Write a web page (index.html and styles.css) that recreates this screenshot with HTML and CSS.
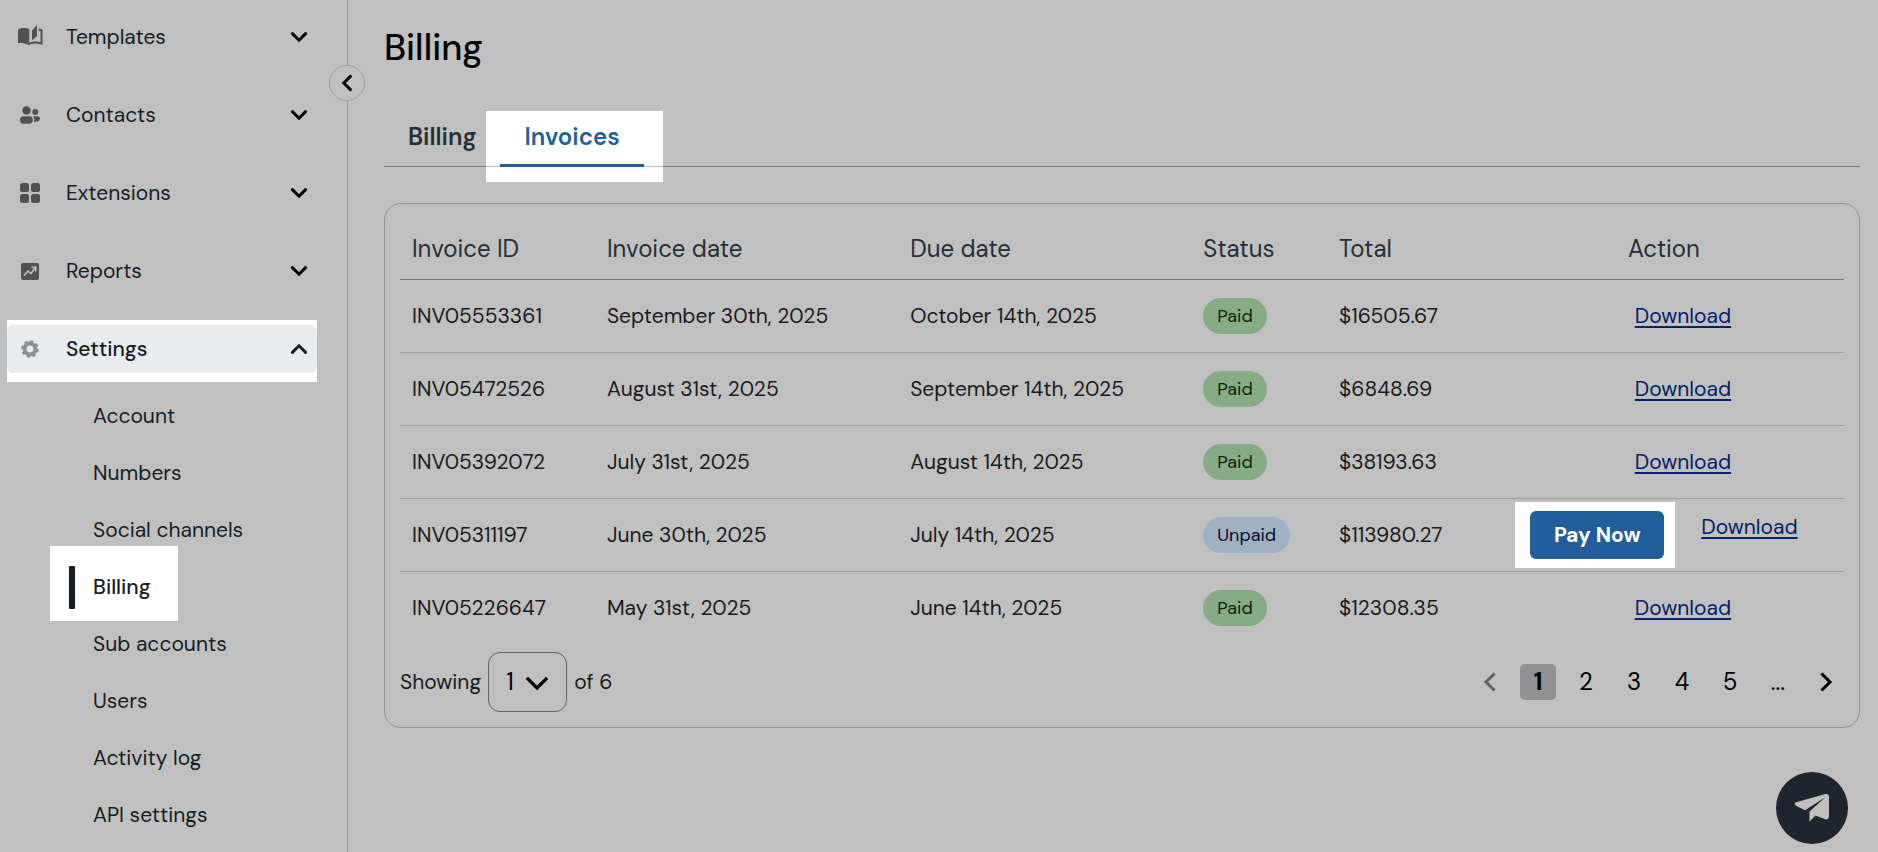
FILE: index.html
```html
<!DOCTYPE html>
<html lang="en">
<head>
<meta charset="utf-8">
<title>Billing</title>
<meta name="viewport" content="width=device-width, initial-scale=1">
<link rel="stylesheet" href="styles.css">
</head>
<body>
<svg class="sprite" aria-hidden="true">
  <symbol id="chevron" viewBox="0 0 18 18"><path d="M2.4 5.6 9 12.2l6.6-6.6" fill="none" stroke="currentColor" stroke-width="3" stroke-linecap="round" stroke-linejoin="miter"/></symbol>
  <symbol id="chevron-wide" viewBox="0 0 24 24"><path d="M3 8 12 17l9-9" fill="none" stroke="currentColor" stroke-width="3.200" stroke-linecap="square"/></symbol>
  <symbol id="chevron-page" viewBox="0 0 24 24"><path d="M4.500 8.500 12 16l7.500-7.500" fill="none" stroke="currentColor" stroke-width="3" stroke-linecap="square"/></symbol>
</svg>
<div class="app">
  <nav class="sidebar" aria-label="Main">
    <button class="collapse" type="button" aria-label="Collapse menu"><svg class="chevron left"><use href="#chevron"/></svg></button>
    <ul class="menu">
      <li><button class="menu-item" type="button">
        <svg class="icon" viewBox="0 0 26 26"><path fill="currentColor" d="M1 6.200Q1 5.400 1.700 5Q6.500 2.900 11.500 4.800Q12.300 5.200 12.300 6V19Q7 17 2.300 19.200Q1 19.700 1 18.600Z"/><path d="M12.300 19.600Q18 17.200 24.500 19.600V5.500" fill="none" stroke="currentColor" stroke-width="2"/><path fill="currentColor" d="M15 6.500 20 1V12L15 16.500ZM21.700 4.200 25.300 5.500V7H21.700ZM2 18Q8 16.500 13 19.500L12.500 21.300 9 20Z"/></svg>
        <span>Templates</span><svg class="chevron"><use href="#chevron"/></svg></button></li>
      <li><button class="menu-item" type="button">
        <svg class="icon" viewBox="0 0 26 26"><g fill="currentColor"><circle cx="9.500" cy="8.500" r="4.200"/><circle cx="18.300" cy="10" r="3"/><rect x="3" y="14.300" width="12.800" height="7.500" rx="3.700"/><path d="M16.200 14.300H20Q23 14.300 23 16.800Q22.700 19.800 18.500 19.800H16.800Q18.300 17 16.200 14.300Z"/></g></svg>
        <span>Contacts</span><svg class="chevron"><use href="#chevron"/></svg></button></li>
      <li><button class="menu-item" type="button">
        <svg class="icon" viewBox="0 0 26 26"><g fill="currentColor"><rect x="3" y="3" width="9" height="9" rx="2.500"/><rect x="14" y="3" width="9" height="9" rx="2.500"/><rect x="3" y="14" width="9" height="9" rx="2.500"/><rect x="14" y="14" width="9" height="9" rx="2.500"/></g></svg>
        <span>Extensions</span><svg class="chevron"><use href="#chevron"/></svg></button></li>
      <li><button class="menu-item" type="button">
        <svg class="icon" viewBox="0 0 26 26"><rect x="4" y="5" width="18" height="17" rx="2" fill="currentColor"/><path d="m7 17.500 4-4.500 3 2.500 4.500-6M14.500 9.200h4.300v4.300" fill="none" stroke="#c0c0c0" stroke-width="1.600"/></svg>
        <span>Reports</span><svg class="chevron"><use href="#chevron"/></svg></button></li>
      <li class="open"><button class="menu-item" type="button" aria-expanded="true">
        <svg class="icon" viewBox="0 0 26 26"><circle cx="13" cy="13" r="5.400" fill="none" stroke="currentColor" stroke-width="4"/><circle cx="13" cy="13" r="7.500" fill="none" stroke="currentColor" stroke-width="2.600" stroke-dasharray="3.200 2.690"/></svg>
        <span>Settings</span><svg class="chevron up"><use href="#chevron"/></svg></button></li>
    </ul>
    <ul class="submenu">
      <li><a href="#">Account</a></li>
      <li><a href="#">Numbers</a></li>
      <li><a href="#">Social channels</a></li>
      <li><a href="#" class="current" aria-current="page">Billing</a></li>
      <li><a href="#">Sub accounts</a></li>
      <li><a href="#">Users</a></li>
      <li><a href="#">Activity log</a></li>
      <li><a href="#">API settings</a></li>
    </ul>
  </nav>

  <main class="main">
    <h1>Billing</h1>
    <div class="tabs" role="tablist">
      <button class="tab" type="button" role="tab" aria-selected="false">Billing</button>
      <button class="tab active" type="button" role="tab" aria-selected="true">Invoices</button>
    </div>

    <section class="card">
      <table class="invoices">
        <colgroup><col class="c-id"><col class="c-date"><col class="c-due"><col class="c-status"><col class="c-total"><col></colgroup>
        <thead>
          <tr><th>Invoice ID</th><th>Invoice date</th><th>Due date</th><th>Status</th><th>Total</th><th class="action">Action</th></tr>
        </thead>
        <tbody>
          <tr><td>INV05553361</td><td>September 30th, 2025</td><td>October 14th, 2025</td><td><span class="badge paid">Paid</span></td><td>$16505.67</td><td class="action"><a href="#">Download</a></td></tr>
          <tr><td>INV05472526</td><td>August 31st, 2025</td><td>September 14th, 2025</td><td><span class="badge paid">Paid</span></td><td>$6848.69</td><td class="action"><a href="#">Download</a></td></tr>
          <tr><td>INV05392072</td><td>July 31st, 2025</td><td>August 14th, 2025</td><td><span class="badge paid">Paid</span></td><td>$38193.63</td><td class="action"><a href="#">Download</a></td></tr>
          <tr><td>INV05311197</td><td>June 30th, 2025</td><td>July 14th, 2025</td><td><span class="badge unpaid">Unpaid</span></td><td>$113980.27</td><td class="action"><div class="pair"><span class="spot"><button class="pay" type="button">Pay Now</button></span><a href="#">Download</a></div></td></tr>
          <tr><td>INV05226647</td><td>May 31st, 2025</td><td>June 14th, 2025</td><td><span class="badge paid">Paid</span></td><td>$12308.35</td><td class="action"><a href="#">Download</a></td></tr>
        </tbody>
      </table>
      <div class="footer">
        <div class="showing">
          <label for="page">Showing</label>
          <span class="select"><select id="page"><option>1</option><option>2</option><option>3</option></select><svg class="chevron big"><use href="#chevron-wide"/></svg></span>
          <span>of 6</span>
        </div>
        <nav class="pager" aria-label="Pages">
          <button type="button" aria-label="Previous" disabled><svg class="chevron left big"><use href="#chevron-page"/></svg></button>
          <button type="button" class="on" aria-current="page">1</button>
          <button type="button">2</button>
          <button type="button">3</button>
          <button type="button">4</button>
          <button type="button">5</button>
          <button type="button">...</button>
          <button type="button" aria-label="Next"><svg class="chevron right big"><use href="#chevron-page"/></svg></button>
        </nav>
      </div>
    </section>
  </main>
</div>
<button class="fab" type="button" aria-label="Send message"><svg viewBox="0 0 36 32"><path fill="#c0c0c0" d="M1.200 10.500 31.500 2Q35 1.500 35 4.500V23.500Q35 28 31 27.300L21.500 23.500 15.500 29.500V19.500L31 5.500 11 18.200 2.500 14Q0 12 1.200 10.500Z"/></svg></button>
</body>
</html>
```

FILE: styles.css
```css
* { box-sizing: border-box; }

body {
  margin: 0;
  background: #c0c0c0;
  color: #1a1b1d;
  font-family: "DM Sans", Inter, sans-serif;
  font-size: 21px;
  line-height: 28px;
}

ul { list-style: none; margin: 0; padding: 0; }

button {
  font: inherit;
  color: inherit;
  background: none;
  border: 0;
  padding: 0;
  cursor: pointer;
}

.sprite { position: absolute; width: 0; height: 0; }

.app { display: flex; min-height: 100vh; }

/* Sidebar */
.sidebar {
  position: relative;
  flex: 0 0 348px;
  padding: 13px 30px 0 7px;
  border-right: 1px solid #989b9b;
  color: #151d25;
}

.collapse {
  position: absolute;
  top: 65px;
  right: -18px;
  width: 36px;
  height: 36px;
  display: grid;
  place-items: center;
  border: 1px solid #989fa3;
  border-radius: 50%;
  background: #c0c0c0;
  color: #000;
}

.menu { display: grid; gap: 30px; }

.menu-item {
  display: flex;
  align-items: center;
  width: 100%;
  height: 48px;
  padding: 0 9px 0 10px;
  border-radius: 6px;
  text-align: left;
}

.menu-item span { flex: 1; padding-left: 23px; }

.icon { width: 26px; height: 26px; color: #515151; }

.chevron { display: block; width: 18px; height: 18px; color: #000; }
.chevron.big { width: 24px; height: 24px; }
.chevron.up { transform: rotate(180deg); }
.chevron.left { transform: rotate(90deg); }
.chevron.right { transform: rotate(-90deg); }

.open { margin-top: -5px; padding: 5px 0 9px; background: #fff; }
.open .menu-item { background: #e8ecef; color: #191d26; font-weight: 500; }
.open .icon { color: #8d8f90; }
.open .chevron { color: #191d26; }

.submenu { padding: 5px 0 0 86px; }

.submenu a {
  position: relative;
  display: inline-block;
  padding: 15px 0 14px;
  color: inherit;
  text-decoration: none;
  vertical-align: top;
}

.submenu .current { z-index: 0; color: #191d26; font-weight: 500; }

.current::before {
  content: "";
  position: absolute;
  z-index: -2;
  top: -12px;
  left: -43px;
  width: 128px;
  height: 75px;
  background: #fff;
}

.current::after {
  content: "";
  position: absolute;
  top: 8px;
  left: -24px;
  width: 6px;
  height: 43px;
  border-radius: 1px;
  background: #191d26;
}

/* Main column */
.main { flex: 1; min-width: 0; padding: 25px 18px 0 36px; }

h1 {
  margin: 0;
  color: #000;
  font-size: 36px;
  font-weight: 500;
  line-height: 46px;
}

.tabs {
  display: flex;
  margin-top: 41px;
  border-bottom: 1px solid #747c83;
}

.tab {
  position: relative;
  height: 54px;
  padding: 0 24px 5px;
  color: #252f37;
  font-size: 24px;
  font-weight: 600;
}

.tab.active { z-index: 0; color: #205f9e; }

.active::before {
  content: "";
  position: absolute;
  z-index: -1;
  inset: -1px -19px -16px -14px;
  background: linear-gradient(#b4c2cc, #b4c2cc) 0 55px / 100% 1px no-repeat #fff;
}

.active::after {
  content: "";
  position: absolute;
  inset: auto 0 -1px;
  height: 3px;
  background: #205f9e;
}

.card {
  margin-top: 36px;
  padding: 15px;
  border: 1px solid #929494;
  border-radius: 17px;
}

.invoices { width: 100%; border-collapse: collapse; table-layout: fixed; }
.c-id { width: 13.5%; }
.c-date { width: 21%; }
.c-due { width: 20.3%; }
.c-status { width: 9.4%; }
.c-total { width: 12.8%; }

.invoices th,
.invoices td {
  padding: 0 0 0 12px;
  text-align: left;
  white-space: nowrap;
}

.invoices th {
  height: 60px;
  color: #252f37;
  font-size: 24px;
  font-weight: 400;
  border-bottom: 1px solid #727b82;
}

.invoices td { height: 73px; border-bottom: 1px solid #9aa1a1; }
.invoices tr:last-child td { border-bottom: 0; }
.invoices .action { padding: 0 0 0 10px; text-align: center; }
.invoices th.action { padding-right: 38px; }

.action a {
  color: #00226a;
  text-decoration-thickness: 2px;
  text-underline-offset: 3px;
}

.pair { display: flex; justify-content: center; align-items: flex-start; gap: 26px; padding-right: 53px; }
.pair a { padding-top: 11px; }
.spot { padding: 9px 11px 9px 15px; background: #fff; }

.pay {
  display: block;
  width: 134px;
  height: 48px;
  border-radius: 6px;
  background: #225e9b;
  color: #fff;
  font-weight: 700;
}

.badge {
  display: inline-block;
  padding: 0 14px;
  border-radius: 18px;
  font-size: 18px;
  font-weight: 400;
  line-height: 36px;
  vertical-align: middle;
}

.paid { background: #86ac85; color: #07240f; }
.unpaid { background: #a0b1c3; color: #060a2c; }

.footer { display: flex; justify-content: space-between; align-items: center; padding-top: 8px; }
.showing { display: flex; align-items: center; gap: 7px; }

.select { position: relative; }
.select select {
  appearance: none;
  display: block;
  width: 79px;
  height: 60px;
  padding: 0 0 0 17px;
  border: 1px solid #5b666d;
  border-radius: 12px;
  background: none;
  color: #000;
  font: inherit;
  font-size: 24px;
}
.select .chevron { position: absolute; top: 19px; right: 18px; pointer-events: none; }

.pager { display: flex; gap: 12px; color: #000; font-size: 24px; }
.pager button { display: grid; place-items: center; width: 36px; height: 36px; border-radius: 5px; }
.pager .on { background: #8f9193; font-weight: 700; }
.pager :disabled .chevron { color: #596670; }

.fab {
  position: fixed;
  right: 30px;
  bottom: 8px;
  width: 72px;
  height: 72px;
  display: grid;
  place-items: center;
  border-radius: 50%;
  background: #1f252c;
}
.fab svg { width: 36px; height: 32px; }
```
